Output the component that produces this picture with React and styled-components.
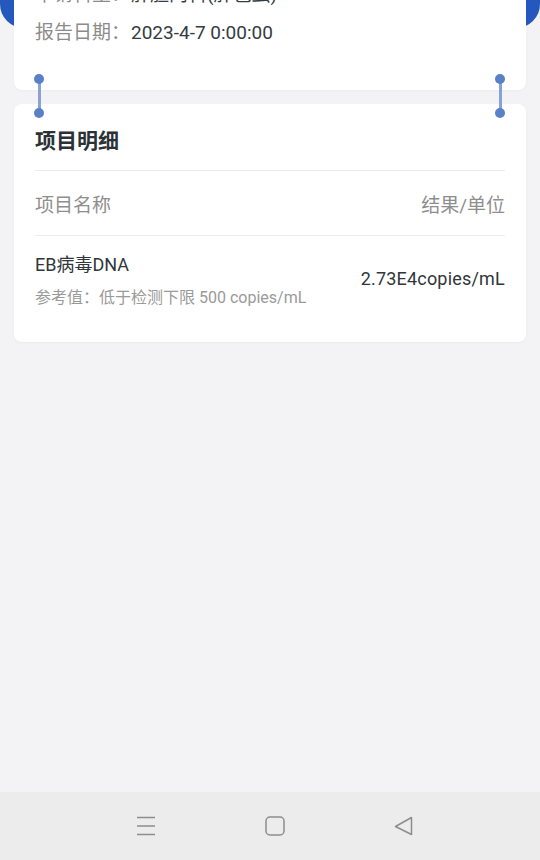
import React from 'react';
import styled, { createGlobalStyle } from 'styled-components';

const GlobalStyle = createGlobalStyle`
  html, body {
    margin: 0;
    padding: 0;
    background: #f3f3f6;
  }
  body {
    font-family: Roboto, "Noto Sans CJK SC", sans-serif;
    -webkit-font-smoothing: antialiased;
  }
`;

const Screen = styled.div`
  width: 540px;
  height: 860px;
  display: flex;
  flex-direction: column;
  overflow: hidden;
  background: #f3f3f6;
`;

const Scroll = styled.div`
  flex: 1;
  overflow: hidden;
`;

const Content = styled.div`
  margin-top: -60px;
`;

const Hero = styled.div`
  height: 88px;
  background: linear-gradient(90deg, #2458bd, #2f66cc 50%, #2458bd);
  border-radius: 0 0 24px 24px;
`;

const Stack = styled.div`
  margin: -68px 14px 0;
  display: flex;
  flex-direction: column;
`;

const Card = styled.div`
  background: #fff;
  border-radius: 8px;
  box-shadow: 0 1px 3px rgba(0, 0, 0, 0.03);
  padding: ${p => p.$pad || '0 21px'};
`;

const InfoRow = styled.div`
  display: flex;
  font-size: 19px;
  line-height: 38px;
  white-space: nowrap;
`;

const Label = styled.span`
  color: #8b8b8b;
`;

const Value = styled.span`
  color: #353b3f;
  margin-left: 1px;
`;

const Gap = styled.div`
  position: relative;
  height: 14px;
`;

const Clip = styled.div`
  position: absolute;
  top: -16px;
  ${p => (p.$side === 'left' ? 'left: 20px;' : 'right: 21px;')}
  width: 10px;
  height: 44px;
  display: flex;
  flex-direction: column;
  justify-content: space-between;
  align-items: center;
  z-index: 2;

  &::before {
    content: '';
    position: absolute;
    top: 5px;
    bottom: 5px;
    left: 3.5px;
    width: 3px;
    background: #86a2d6;
  }
`;

const Dot = styled.span`
  position: relative;
  width: 10px;
  height: 10px;
  border-radius: 50%;
  background: #5a80c6;
`;

const Title = styled.div`
  padding: 22px 0 14px;
  font-size: 21px;
  line-height: 30px;
  font-weight: 700;
  color: #2b3236;
  border-bottom: 1px solid #ececee;
`;

const HeadRow = styled.div`
  display: flex;
  justify-content: space-between;
  padding: 19px 0 14px;
  font-size: 19px;
  line-height: 31px;
  color: #8e8e8e;
  border-bottom: 1px solid #ececee;
`;

const ItemRow = styled.div`
  display: flex;
  justify-content: space-between;
  align-items: center;
  padding: 16px 0 33px;
`;

const ItemName = styled.div`
  font-size: 18px;
  line-height: 26px;
  color: #30363a;
`;

const ItemRef = styled.div`
  margin-top: 9px;
  font-size: 16px;
  line-height: 22px;
  color: #9a9a9a;
`;

const ItemResult = styled.div`
  font-size: 18px;
  line-height: 26px;
  letter-spacing: 0.2px;
  color: #30363a;
  margin-top: -4px;
`;

const NavBar = styled.div`
  height: 67px;
  background: #ececec;
  display: flex;
  justify-content: center;
  align-items: center;
  gap: 109px;
  padding: 0 0 1px 9px;
`;

const NavIcon = styled.svg`
  width: 20px;
  height: 20px;
  display: block;
`;

const ClipPair = ({ side }) => (
  <Clip $side={side}>
    <Dot />
    <Dot />
  </Clip>
);

export default function App() {
  return (
    <Screen>
      <GlobalStyle />
      <Scroll>
        <Content>
          <Hero />
          <Stack>
            <Card $pad="16px 21px 38px">
              <InfoRow>
                <Label>申请科室：</Label>
                <Value>肝胆内科(肝包虫)</Value>
              </InfoRow>
              <InfoRow>
                <Label>报告日期：</Label>
                <Value>2023-4-7 0:00:00</Value>
              </InfoRow>
            </Card>
            <Gap>
              <ClipPair side="left" />
              <ClipPair side="right" />
            </Gap>
            <Card>
              <Title>项目明细</Title>
              <HeadRow>
                <span>项目名称</span>
                <span>结果/单位</span>
              </HeadRow>
              <ItemRow>
                <div>
                  <ItemName>EB病毒DNA</ItemName>
                  <ItemRef>参考值：低于检测下限 500 copies/mL</ItemRef>
                </div>
                <ItemResult>2.73E4copies/mL</ItemResult>
              </ItemRow>
            </Card>
          </Stack>
        </Content>
      </Scroll>
      <NavBar>
        <NavIcon viewBox="0 0 20 20" fill="none" stroke="#8d8d8d" strokeWidth="1.5">
          <path d="M1 1.5h18M1 10h18M1 18.5h18" />
        </NavIcon>
        <NavIcon viewBox="0 0 20 20" fill="none" stroke="#8d8d8d" strokeWidth="1.5">
          <rect x="1" y="1" width="18" height="18" rx="4" />
        </NavIcon>
        <NavIcon viewBox="0 0 20 20" fill="none" stroke="#8d8d8d" strokeWidth="1.5" strokeLinejoin="round">
          <path d="M17.5 1.5v17L1.5 10.5z" />
        </NavIcon>
      </NavBar>
    </Screen>
  );
}
